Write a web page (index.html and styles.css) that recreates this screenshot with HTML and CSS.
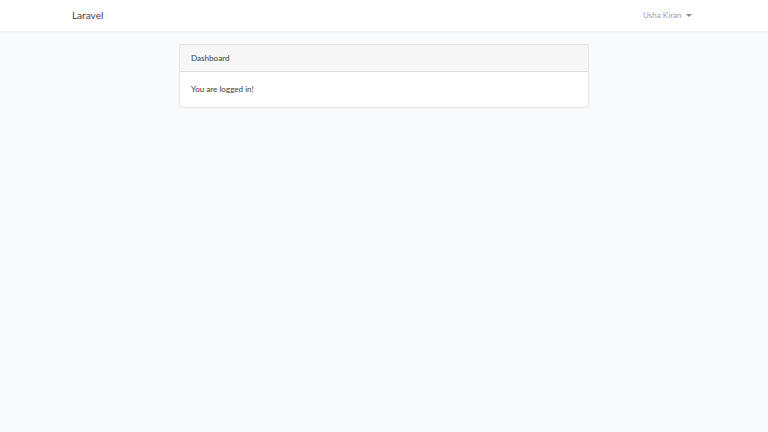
FILE: index.html
```html
<!DOCTYPE html>
<html lang="en">
<head>
    <meta charset="UTF-8">
    <meta name="viewport" content="width=device-width, initial-scale=1.0">
    <title>Laravel</title>
    <link rel="stylesheet" href="styles.css">
</head>
<body>

    <nav class="navbar">
        <div class="container navbar-inner">
            <a class="navbar-brand" href="#">Laravel</a>
            <ul class="navbar-nav">
                <li class="nav-item">
                    <a class="nav-link dropdown-toggle" href="#">Usha Kiran</a>
                </li>
            </ul>
        </div>
    </nav>

    <main class="main">
        <div class="container">
            <div class="row">
                <div class="col-8">
                    <div class="card">
                        <div class="card-header">Dashboard</div>
                        <div class="card-body">
                            You are logged in!
                        </div>
                    </div>
                </div>
            </div>
        </div>
    </main>

</body>
</html>
```

FILE: styles.css
```css
* {
    box-sizing: border-box;
}

body {
    margin: 0;
    padding: 0;
    font-family: "Lato", "Open Sans", sans-serif;
    font-size: 8.1px;
    line-height: 1.6;
    color: #3a3d40;
    background-color: #f8fafc;
}

a {
    text-decoration: none;
}

.container {
    max-width: 641px;
    margin: 0 auto;
    padding: 0 8.4px;
}

.navbar {
    background-color: #fff;
    box-shadow: 0 1px 2px rgba(0, 0, 0, 0.05);
}

.navbar-inner {
    display: flex;
    align-items: center;
    justify-content: space-between;
    height: 31px;
}

.navbar-brand {
    font-size: 10.1px;
    color: rgba(0, 0, 0, 0.8);
}

.navbar-nav {
    list-style: none;
    margin: 0;
    padding: 0;
}

.nav-link {
    display: block;
    padding: 4.5px;
    color: rgba(0, 0, 0, 0.45);
}

.dropdown-toggle::after {
    content: "";
    display: inline-block;
    margin-left: 4px;
    vertical-align: 1.5px;
    border-top: 3px solid;
    border-right: 3px solid transparent;
    border-left: 3px solid transparent;
}

.main {
    padding: 13px 0;
}

.row {
    display: flex;
    justify-content: center;
    margin: 0 -8.4px;
}

.col-8 {
    width: 66.6667%;
    padding: 0 8.4px;
}

.card {
    background-color: #fff;
    border: 1px solid rgba(0, 0, 0, 0.1);
    border-radius: 2px;
}

.card-header {
    padding: 6.5px 11.25px;
    background-color: rgba(0, 0, 0, 0.03);
    border-bottom: 1px solid rgba(0, 0, 0, 0.1);
}

.card-body {
    padding: 11.25px;
}
```
